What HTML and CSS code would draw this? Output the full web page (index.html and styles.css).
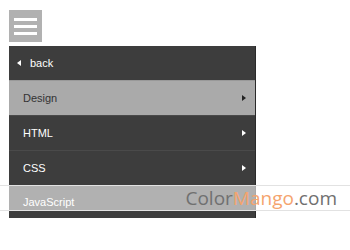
FILE: index.html
```html
<!DOCTYPE html>
<html lang="en">
<head>
  <meta charset="UTF-8" />
  <title>Menu</title>
  <link rel="stylesheet" href="styles.css">
</head>
<body>

  <div class="page">
    <button class="burger" aria-label="menu">
      <span></span><span></span><span></span>
    </button>

    <ul class="menu">
      <li class="back"><span class="arrow-left"></span>back</li>
      <li class="item active">Design<span class="arrow-right"></span></li>
      <li class="item">HTML<span class="arrow-right"></span></li>
      <li class="item">CSS<span class="arrow-right"></span></li>
      <li class="item last">JavaScript</li>
    </ul>
  </div>

  <div class="watermark">Color<span class="mango">Mango</span>.com</div>

</body>
</html>
```

FILE: styles.css
```css
body {
  margin: 0;
  font-family: "Liberation Sans", Arial, sans-serif;
  background: #fff;
}

.page {
  padding: 10px 0 0 9px;
}

.burger {
  display: flex;
  flex-direction: column;
  justify-content: center;
  gap: 4px;
  width: 33px;
  height: 32px;
  padding: 0 5px;
  border: none;
  background: #b1b1b1;
  margin-bottom: 4px;
}

.burger span {
  display: block;
  height: 3px;
  background: #fff;
}

.menu {
  list-style: none;
  margin: 0;
  padding: 0;
  width: 246px;
  background: #3d3d3d;
  border-right: 1px solid #2a2a2a;
  font-size: 11px;
  color: #fff;
}

.menu li {
  display: flex;
  align-items: center;
  height: 34px;
  padding: 0 9px 0 14px;
  border-top: 1px solid #4a4a4a;
}

.menu .back {
  height: 34px;
  padding-left: 8px;
  border-top: none;
}

.menu .last {
  height: 31px;
  padding-bottom: 1px;
}

.menu .item.active {
  background: #aaaaaa;
  color: #333;
  border-top-color: #999;
}

.arrow-left {
  width: 0;
  height: 0;
  border-top: 3px solid transparent;
  border-bottom: 3px solid transparent;
  border-right: 4px solid #fff;
  margin-right: 9px;
}

.arrow-right {
  width: 0;
  height: 0;
  margin-left: auto;
  border-top: 3px solid transparent;
  border-bottom: 3px solid transparent;
  border-left: 4px solid #fff;
}

.active .arrow-right {
  border-left-color: #222;
}

.watermark {
  position: absolute;
  left: 0;
  right: 0;
  top: 185px;
  height: 24px;
  background: rgba(255, 255, 255, 0.6);
  border-top: 1px solid #e2e2e2;
  border-bottom: 1px solid #e2e2e2;
  text-align: right;
  padding-right: 13px;
  font-family: "Open Sans", "DejaVu Sans", sans-serif;
  font-size: 19px;
  line-height: 24px;
  color: #707070;
}

.watermark .mango {
  color: #f5a46e;
}
```
